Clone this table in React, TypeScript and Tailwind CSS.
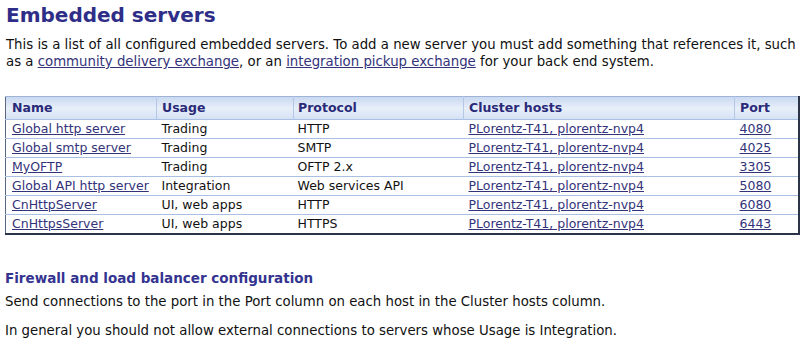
import React from 'react';

const rows = [
  { name: 'Global http server', usage: 'Trading', protocol: 'HTTP', port: '4080' },
  { name: 'Global smtp server', usage: 'Trading', protocol: 'SMTP', port: '4025' },
  { name: 'MyOFTP', usage: 'Trading', protocol: 'OFTP 2.x', port: '3305' },
  { name: 'Global API http server', usage: 'Integration', protocol: 'Web services API', port: '5080' },
  { name: 'CnHttpServer', usage: 'UI, web apps', protocol: 'HTTP', port: '6080' },
  { name: 'CnHttpsServer', usage: 'UI, web apps', protocol: 'HTTPS', port: '6443' },
];

const verdana = { fontFamily: 'Verdana, "DejaVu Sans", sans-serif' };

const App = () => {
  return (
    <div className="min-h-screen w-full bg-white text-[#111]" style={verdana}>
      <div className="px-[6px] pt-[1px]">
        <h1 className="text-[20px] font-bold leading-[28px] text-[#2e2e88]">Embedded servers</h1>
        <p className="mt-[7px] text-[13.3px] leading-[17px] text-[#111]">
          This is a list of all configured embedded servers. To add a new server you must add something that references it, such
          <br />
          as a <a href="#" className="text-[#33337a] underline">community delivery exchange</a>, or an{' '}
          <a href="#" className="text-[#33337a] underline">integration pickup exchange</a> for your back end system.
        </p>
      </div>

      <div className="mt-[26px] pl-[5px] pr-[5px]">
        <table className="w-full border-collapse border-t border-l border-t-[#9fb3d6] border-l-[#5a6780] border-r-2 border-b-2 border-r-[#2c3548] border-b-[#2c3548] text-[12.5px] leading-[18px]">
          <thead>
            <tr className="bg-gradient-to-b from-[#c9d9f1] via-[#e8eff9] to-[#d3e0f4] text-left text-[#2a2a78]">
              <th className="w-[151px] border-r border-r-[#b4c7e6] px-[6px] pt-[2px] pb-[2px] font-bold">Name</th>
              <th className="w-[137px] border-r border-r-[#b4c7e6] px-[5px] pt-[2px] pb-[2px] font-bold">Usage</th>
              <th className="w-[170px] border-r border-r-[#b4c7e6] px-[4px] pt-[2px] pb-[2px] font-bold">Protocol</th>
              <th className="w-[271px] border-r border-r-[#b4c7e6] px-[5px] pt-[2px] pb-[2px] font-bold">Cluster hosts</th>
              <th className="px-[5px] pt-[2px] pb-[2px] font-bold">Port</th>
            </tr>
          </thead>
          <tbody>
            {rows.map((r) => (
              <tr key={r.name} className="border-t border-t-[#a9bfe3]">
                <td className="px-[6px] py-0">
                  <a href="#" className="text-[#33337a] underline">{r.name}</a>
                </td>
                <td className="px-[5px] py-0">{r.usage}</td>
                <td className="px-[4px] py-0">{r.protocol}</td>
                <td className="px-[5px] py-0">
                  <a href="#" className="text-[#33337a] underline">PLorentz-T41, plorentz-nvp4</a>
                </td>
                <td className="px-[5px] py-0">
                  <a href="#" className="text-[#33337a] underline">{r.port}</a>
                </td>
              </tr>
            ))}
          </tbody>
        </table>
      </div>

      <div className="mt-[33px] px-[5px]">
        <h2 className="text-[13.5px] font-bold leading-[20px] text-[#343490]">Firewall and load balancer configuration</h2>
        <p className="mt-[5px] text-[13.3px] leading-[18px] text-[#111]">
          Send connections to the port in the Port column on each host in the Cluster hosts column.
        </p>
        <p className="mt-[11px] text-[13.3px] leading-[18px] text-[#111]">
          In general you should not allow external connections to servers whose Usage is Integration.
        </p>
      </div>
    </div>
  );
};

export default App;
